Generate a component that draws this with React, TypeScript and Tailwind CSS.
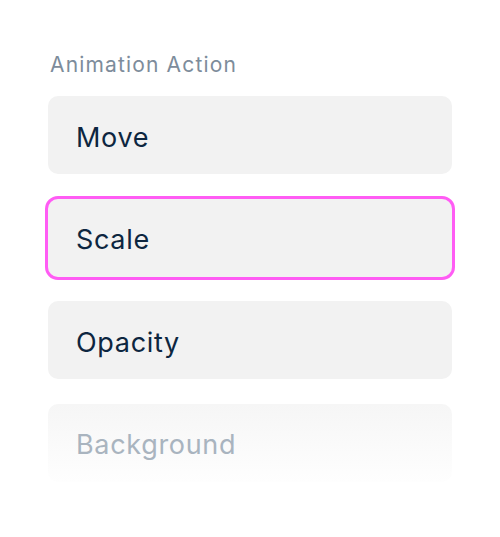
const ACTIONS = ['Move', 'Scale', 'Opacity']

export default function App() {
  return (
    <div
      className="w-[500px] h-[537px] bg-white px-12 pt-[51px]"
      style={{ fontFamily: 'Inter, "Noto Sans", sans-serif' }}
    >
      <div className="pl-[2px] text-[21px] leading-[28px] text-[#7d8c9b] tracking-[0.055em]">
        Animation Action
      </div>

      <div className="mt-[17px] flex flex-col gap-[24.5px]">
        {ACTIONS.map((a) => (
          <div
            key={a}
            className={
              a === 'Scale'
                ? 'h-[78px] rounded-[10px] bg-[#f2f2f2] flex items-center px-7 pt-[6px] outline outline-[3px] outline-offset-[0.5px] outline-[#ff5cf4]'
                : 'h-[78px] rounded-[10px] bg-[#f2f2f2] flex items-center px-7 pt-[6px]'
            }
          >
            <span className="text-[27px] text-[#0d2640] tracking-[0.025em]">{a}</span>
          </div>
        ))}

        <div className="h-[78px] rounded-[10px] bg-gradient-to-b from-[#f6f6f6] to-[#fefefe] flex items-center px-7 pt-[6px]">
          <span className="text-[27px] text-[#a9b4bf] tracking-[0.025em]">Background</span>
        </div>
      </div>
    </div>
  )
}
